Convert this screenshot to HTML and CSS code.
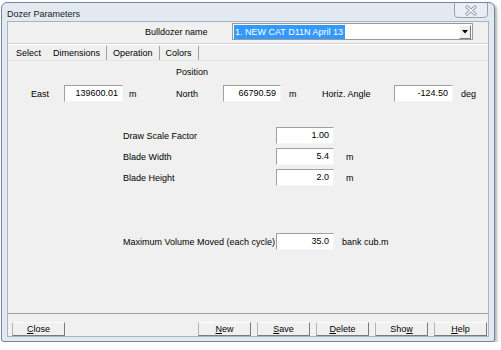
FILE: index.html
```html
<!DOCTYPE html>
<html lang="en">
<head>
    <meta charset="UTF-8">
    <title>Dozer Parameters</title>
    <link rel="stylesheet" href="styles.css">
</head>
<body>
    <div class="window">
        <div class="titlebar">
            <span class="title">Dozer Parameters</span>
            <div class="close-x">
                <svg width="34" height="15" viewBox="0 0 34 15">
                    <path d="M0.5 0 V11 Q0.5 14.5 4 14.5 H30 Q33.5 14.5 33.5 11 V0" fill="#e9eef4" stroke="#97a3b1"/>
                    <path d="M13 4 L21 11 M21 4 L13 11" stroke="#8b96a3" stroke-width="3.2" stroke-linecap="round"/>
                    <path d="M13 4 L21 11 M21 4 L13 11" stroke="#ffffff" stroke-width="1.6" stroke-linecap="round"/>
                </svg>
            </div>
        </div>

        <div class="client">
            <div class="name-row">
                <span class="name-label">Bulldozer name</span>
                <div class="combo">
                    <span class="combo-text"><span class="selected">1. NEW CAT D11N April 13</span></span>
                    <span class="combo-btn">
                        <svg width="6" height="4" viewBox="0 0 6 4"><path d="M0 0 H6 L3 3.5 Z" fill="#000"/></svg>
                    </span>
                </div>
            </div>
            <div class="separator"></div>

            <div class="tabs">
                <span class="tab first">Select</span>
                <span class="tab active">Dimensions</span>
                <span class="tab">Operation</span>
                <span class="tab">Colors</span>
            </div>

            <div class="panel">
                <div class="pos-title">Position</div>
                <div class="position">
                    <span>East</span>
                    <span class="field">139600.01</span>
                    <span class="unit u6">m</span>
                    <span>North</span>
                    <span class="field">66790.59</span>
                    <span class="unit u8">m</span>
                    <span>Horiz. Angle</span>
                    <span class="field">-124.50</span>
                    <span class="unit u8">deg</span>
                </div>

                <div class="dims">
                    <span>Draw Scale Factor</span>
                    <span class="field">1.00</span>
                    <span></span>
                    <span>Blade Width</span>
                    <span class="field">5.4</span>
                    <span class="unit u12">m</span>
                    <span>Blade Height</span>
                    <span class="field">2.0</span>
                    <span class="unit u12">m</span>
                </div>

                <div class="dims volume">
                    <span>Maximum Volume Moved (each cycle)</span>
                    <span class="field">35.0</span>
                    <span class="unit u8">bank cub.m</span>
                </div>
            </div>

            <div class="buttons">
                <button class="btn"><u>C</u>lose</button>
                <span class="spacer"></span>
                <button class="btn"><u>N</u>ew</button>
                <button class="btn"><u>S</u>ave</button>
                <button class="btn"><u>D</u>elete</button>
                <button class="btn">Sho<u>w</u></button>
                <button class="btn"><u>H</u>elp</button>
            </div>
        </div>
    </div>
</body>
</html>
```

FILE: styles.css
```css
* {
    margin: 0;
    padding: 0;
    box-sizing: border-box;
}

body {
    background-color: #ffffff;
    font-family: "Liberation Sans", Arial, sans-serif;
    font-size: 9px;
    color: #000000;
    white-space: nowrap;
}

/* Window frame */
.window {
    margin: 2px 0 0 1px;
    width: 494px;
    height: 340px;
    border: 1px solid #77879a;
    border-radius: 6px 6px 3px 3px;
    background-color: #e2e9f1;
    padding: 0 5px 4px 5px;
    box-shadow: 2px 2px 3px rgba(0, 0, 0, 0.3);
    display: flex;
    flex-direction: column;
}

.titlebar {
    height: 18px;
    display: flex;
    justify-content: space-between;
    align-items: center;
}

.title {
    font-size: 9px;
    color: #1b1b1b;
    margin-top: 4px;
}

.close-x {
    align-self: flex-start;
    height: 15px;
    margin-right: 1px;
}

.close-x svg {
    display: block;
}

/* Client area */
.client {
    flex: 1;
    background-color: #f0f0f0;
    border: 1px solid #a7b3c0;
    display: flex;
    flex-direction: column;
}

.name-row {
    display: flex;
    align-items: center;
    margin-top: 1px;
    padding-left: 137px;
}

.name-label {
    width: 87px;
}

.combo {
    width: 241px;
    height: 17px;
    background-color: #ffffff;
    border: 1px solid #9a9a9a;
    display: flex;
    align-items: center;
    padding: 1px;
}

.combo-text {
    flex: 1;
}

.selected {
    background-color: #3399ff;
    color: #ffffff;
    padding: 2px 2px 2px 1px;
}

.combo-btn {
    width: 12px;
    height: 14px;
    background-color: #f0f0f0;
    border-top: 1px solid #ffffff;
    border-left: 1px solid #ffffff;
    border-right: 1px solid #7c7c7c;
    border-bottom: 1px solid #7c7c7c;
    display: flex;
    align-items: center;
    justify-content: center;
}

.separator {
    margin-top: 3px;
    height: 2px;
    border-top: 1px solid #d4d4d4;
    border-bottom: 1px solid #ffffff;
}

/* Tabs */
.tabs {
    margin-top: 1px;
    height: 14px;
    display: flex;
}

.tab {
    padding: 0 6px;
    line-height: 14px;
    border-right: 1px solid #a0a0a0;
}

.tab.first {
    padding-left: 8px;
    border-right: none;
}

.panel {
    height: 254px;
    border-top: 1px solid #e4e4e4;
    border-bottom: 1px solid #a0a0a0;
    padding-top: 5px;
}

.pos-title {
    height: 12px;
    line-height: 12px;
    padding-left: 168px;
}

.position {
    display: grid;
    grid-template-columns: 33px 59px 53px 47px 58px 41px 72px 59px auto;
    grid-template-rows: 17px;
    align-items: center;
    padding-left: 23px;
    margin-top: 7px;
}

.field {
    height: 17px;
    background-color: #ffffff;
    border-top: 1px solid #a0a0a0;
    border-left: 1px solid #a0a0a0;
    border-right: 1px solid #f6f6f6;
    border-bottom: 1px solid #f6f6f6;
    text-align: right;
    padding-right: 4px;
    line-height: 15px;
}

.unit.u6 { padding-left: 6px; }
.unit.u8 { padding-left: 8px; }
.unit.u12 { padding-left: 12px; }

.dims {
    display: grid;
    grid-template-columns: 153px 58px auto;
    grid-auto-rows: 17px;
    row-gap: 4px;
    align-items: center;
    padding-left: 115px;
    margin-top: 25px;
}

.dims.volume {
    margin-top: 47px;
}

/* Bottom buttons */
.buttons {
    display: flex;
    gap: 6px;
    padding: 8px 1px 0 4px;
}

.spacer {
    flex: 1;
}

.btn {
    width: 53px;
    height: 14px;
    font-family: "Liberation Sans", Arial, sans-serif;
    font-size: 9px;
    color: #000000;
    background-color: #f0f0f0;
    border-top: 1px solid #ffffff;
    border-left: 1px solid #b4b4b4;
    border-right: 1px solid #7a7a7a;
    border-bottom: 1px solid #7a7a7a;
}
```
